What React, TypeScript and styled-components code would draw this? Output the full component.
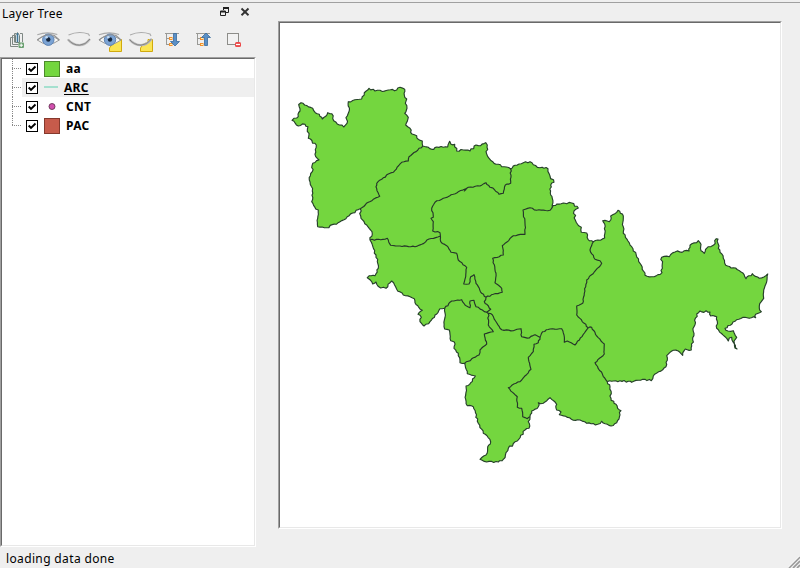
import React from 'react';
import styled, { createGlobalStyle } from 'styled-components';

const GlobalStyle = createGlobalStyle`
  * { box-sizing: border-box; }
  body { margin: 0; background: #efefef; overflow: hidden; }
`;

const Window = styled.div`
  width: 800px;
  height: 568px;
  padding-top: 2px;
  display: flex;
  flex-direction: column;
  background: #efefef;
  color: #000;
  font: 12px/16px 'Noto Sans', sans-serif;
`;

const Workspace = styled.main`
  height: 545px;
  border-top: 1px solid #a0a0a0;
  display: flex;
  gap: 22px;
`;

const Dock = styled.aside`
  width: 256px;
  display: flex;
  flex-direction: column;
`;

const DockTitle = styled.header`
  height: 20px;
  padding: 3px 6px 0 2px;
  display: flex;
  align-items: flex-start;
  justify-content: space-between;
`;

const TitleText = styled.span`
  letter-spacing: 0.25px;
`;

const TitleButtons = styled.div`
  display: flex;
  gap: 10px;
  padding-top: 1px;
  svg { display: block; }
`;

const Toolbar = styled.div`
  height: 34px;
  padding: 5px 0 0 5px;
  display: flex;
  gap: 7px;
  svg { display: block; overflow: visible; }
`;

const Sunken = styled.div`
  border: 1px solid;
  border-color: #a0a0a0 #fff #fff #a0a0a0;
  & > * {
    border: 1px solid;
    border-color: #696969 #e8e8e8 #e8e8e8 #696969;
    background: #fff;
    width: 100%;
    height: 100%;
  }
`;

const TreeFrame = styled(Sunken)`
  height: 490px;
`;

const MapFrame = styled(Sunken)`
  width: 504px;
  height: 508px;
  margin-top: 18px;
`;

const Tree = styled.ul`
  margin: 0;
  padding: 0;
  list-style: none;
`;

const Row = styled.li`
  height: 19px;
  padding-left: 10px;
  display: flex;
  align-items: stretch;
`;

const Branch = styled.svg`
  width: 10px;
  height: 19px;
  flex: none;
`;

const RowBody = styled.div<{ $selected?: boolean }>`
  flex: 1;
  padding-left: 4px;
  display: flex;
  align-items: center;
  background: ${p => (p.$selected ? '#efefef' : 'transparent')};
`;

const Check = styled.svg`
  width: 12px;
  height: 12px;
  margin-right: 6px;
  flex: none;
`;

const Swatch = styled.svg<{ $w: number }>`
  width: ${p => p.$w}px;
  height: 16px;
  margin-right: 6px;
  flex: none;
`;

const Label = styled.span<{ $active?: boolean }>`
  font-weight: 700;
  line-height: 18px;
  letter-spacing: 0.3px;
  text-decoration: ${p => (p.$active ? 'underline' : 'none')};
  text-underline-offset: 2px;
`;

const StatusBar = styled.footer`
  flex: 1;
  display: flex;
  justify-content: space-between;
  align-items: flex-start;
  padding: 4px 0 0 6px;
`;

const StatusText = styled.span`
  letter-spacing: 0.36px;
`;

const Grip = styled.svg`
  align-self: flex-end;
  display: block;
`;

const MapCanvas = styled.svg`
  display: block;
`;

/* ---------- icons ---------- */

const Eye = () => (
  <>
    <path d="M1 10Q11 1 23 10Q12 18.5 1 10Z" fill="#f7f7f5" stroke="#999" strokeWidth="1" />
    <path d="M1 4.7Q11 1 21 4.5" fill="none" stroke="#aaa" strokeWidth="1.2" />
    <circle cx="12" cy="9.7" r="5.7" fill="#7ba3d4" stroke="#5c82b3" />
    <circle cx="12" cy="9.5" r="2.2" fill="#16263c" />
    <circle cx="10.3" cy="7.3" r="1.3" fill="#c5dcf3" />
    <path d="M1 10Q10 2.8 18 5.5L23 10" fill="none" stroke="#929292" strokeWidth="1.2" />
  </>
);

const ClosedEye = () => (
  <>
    <path d="M1 5Q11 .5 21 4L22 6" fill="none" stroke="#aaa" strokeWidth="1.1" />
    <path d="M.5 9.5Q5 15 12 15.2Q18 15 22.5 9" fill="none" stroke="#bbb" strokeWidth="2.3" />
    <path d="M.5 9.5Q5 15 12 15.2Q18 15 22.5 9" fill="none" stroke="#858585" strokeWidth="1" />
  </>
);

const Note = () => <path d="M11.5 18L14 14.5L19 12V9.5H23.5V21.5H11.5Z" fill="#fbe553" stroke="#d0a90e" strokeWidth="1" />;

const TreeLines = () => (
  <>
    <path d="M0 3.5H14M1.5 4V15M2 8.5H4M2 14.5H4" fill="none" stroke="#9a9a96" />
    <rect x="4.5" y="7.5" width="2.5" height="2" fill="#fff0b0" stroke="#f3902c" />
    <rect x="4.5" y="13.5" width="2.5" height="2" fill="#fff0b0" stroke="#f3902c" />
  </>
);

const ToolIcon = ({ children }: { children: React.ReactNode }) => (
  <svg width="24" height="24" viewBox="0 0 24 24">{children}</svg>
);

/* ---------- map geometry ---------- */

const OUTLINE = `292,120.3 296.7,118 300,111 298.7,104.5 301,102.7 306.7,105.5 312.7,108.3 315.3,112.7 319.3,114.3 322.3,119
325.7,116.3 327.7,112.7 331.7,113.7 333.7,120.7 343.7,127 347,123.3 346,117.7 348.7,112.3 348.3,101.7 361.7,99 364.3,92.7
369,88.3 375,91 380,90.3 382.3,91.5 388.3,90 396.7,90 400,87.3 404.7,89.3 404.3,95 406.7,99 405.3,103.3 407,108.3
404.7,113.3 408.3,117.3 405.7,125 410,128.3 412,134 416.7,135.7 418.3,139.3 422.3,141 422.7,146 428.3,147.3 431.7,149.3
436.7,147 447.7,147 449.7,141.3 451,144.3 454.7,144.3 456.7,151 463.3,150 470,151 476,145 480.7,145.7 485.7,142.7
487.3,145 486.7,154 492.7,161.7 501.7,166.7 510.7,169 515,165.3 523.3,162.7 530,161.7 533.3,164.7 540,167.7 548,168.7
550,176 554,182.3 550.7,185 550.7,195 552.3,198.3 552.3,207.3 556.7,204 563.3,203 566.7,203.7 571.7,203 578.3,208
574,211 575.3,220 581.3,227.3 581.3,232.3 586.7,233 588,239.3 593.3,241.7 604.7,238 604.7,224 602.7,220.7 609.3,221.7
610.7,216 618,210.3 623.3,216 623.3,233.3 631.7,246.7 640,263.3 645,275.3 651.7,276.7 662,272.7 661.7,257.3 669.3,256.7
675,252 689,251 690,245.3 698.3,240.7 701,244.3 701,250.7 704.3,253.3 708.3,246.7 713.3,245.3 716.3,238.7 718,239
718.3,248.3 723.3,258.3 725.7,265.3 733.3,267.7 740.7,271.7 746,278.7 752.3,273.7 759.3,278.3 767.7,274 767,280
763.7,290 763.7,298.3 759.3,306 761.3,311.7 755.7,314.3 755.7,317.7 745,317.3 735,321.3 725,328.3 728,331 733.3,330.7
736.7,337.3 734,341.3 734.5,344 737,349 735,348 733,342 731.7,337.3 729.3,338 728.3,341 725,336.7 716.7,328.3
716.7,316.7 710.7,316 710,312 700,311 696.7,314 694,326.7 692.7,340 691.3,350 685.3,349 682.7,355.3 678.3,351
673.3,350.3 666.7,355.7 666,366.7 653.3,376 651.3,380.7 645,379.3 638.3,380.3 631.7,382.3 628.3,381.3 607.3,381.7
610,386.7 611,398.3 614,403.3 621,410.7 616.7,422.7 611,426 601.7,421.3 597.7,424.3 586.7,423.3 580,420 573.3,420.3
559.3,414.7 561,412 556.7,410 556.7,404.3 550,397.7 543.3,403.3 538.3,402.7 538.3,406.7 531.7,411 530,416.7
528.3,421.7 529,428.3 525,430 517.3,441 508.3,448.3 503.3,459.3 498.3,462 486.7,462 480,459.3 486,455 487.7,446.7
490.7,442 488,437.3 483.3,433.3 478.3,423.3 473.3,406.7 467.3,405.7 465.7,395 466,386 470.7,382.7 475.3,376 467.3,373.7
464.7,363.3 460,362.7 458.3,353.3 454,348.3 454.3,342 450.7,340.7 449.3,330 444.7,329 444.7,308.3 440,308.7 435,315
430,321.7 424,326 420,321.7 421.3,317.3 418,314.3 422.3,310.3 415,302.7 414.3,298.7 403.3,295 396.7,289.3 391.7,281
386,288.3 380.7,288 376,282 372.7,284 367.3,277.7 369.3,275.7 375,275.7 378.3,268.3 376,255 370,240 372.3,234
366.7,225 361,218.3 360.3,208.7 340,221.7 326.7,227.7 317.7,226.7 318.3,210 315.7,209 311.7,201.7 312.3,191 309.3,180
312.3,171.7 312.7,163.3 319,160 315,154.3 316.3,145 308.3,138.3 308,126.7 305,124.3 298.3,126 292,120.3`;

const BORDERS = [
  '422.7,146 409,156.7 408.3,161 401.7,162.3 393.3,172.3 388.3,174 376.7,183.3 376,186.7 379.7,196.3 368.3,202.3 360.3,208.7',
  '370,240 385,239.3 387.3,238.3 390.7,245.3 400,246 415,246.7 421.7,244.3 429,239 440,236.3',
  '510.7,169 510.7,183.3 505.3,185 503.3,193.3 499,194.3 493.3,188.3 490,187.3 486,182.7 480,186 468.3,187.3 464.3,191 466.5,188.5 453.3,194.3 443.3,198.3 435,202.3 431.7,208.3 433.3,217.3 431,218.3 433.3,221.7 432.7,231 440,232.7 440.7,241.7 446.7,245.7 451,252.3 456.7,253.3 458.3,260 466.7,267.3 465.7,276.7 463.7,284 469,284 470.7,276.7 474,274.7 476,283.3 479.3,288.3 481.7,293.3 486,297.3',
  '486,297.3 493.3,294.3 502.3,292.3 501.7,288.3 495,282.7 496,273.3 492.7,258.3 503.3,255 502.3,245.7 513.3,235.7 525,234.3 525,223.3 523,210 530,207.7 536.7,210.3 550,210.3 552.3,207.3',
  '486,297.3 484.3,301.7 490.7,309.3 486.7,312.3',
  '444.7,308.3 451.7,301 461.7,299.7 465,305 470,307.7 470,301 474,300.3 476,306.7 486.7,312.3 492.3,314.7 496.7,322.7 501.7,329.7 513.3,330.7 521,328.7 521.7,336.7 529.3,338 535,334.7 540,337.3 542.7,331.7 550,329 561.7,328.7 564,335 564.3,342.3 567.3,341 575,345 588.3,327.7',
  '488.3,313.3 488.3,325 493.3,331.7 484.3,334 486.7,344 480,350 479,355 464.7,363.3',
  '540,337.3 538.3,342.7 534,344.3 533.3,351.7 528.3,357.3 531,369.3 521.7,380 508.3,387.7 517.3,396.7 517.3,407.3 521.7,408.3 522.7,416.7 527.3,418.7 530,416.7',
  '588.3,327.7 576.7,315 576.7,306 582.7,303.3 584.3,293.3 586.7,280 601.7,263.3 600,260.7 595,259.3 590,250 593.3,241.7',
  '588.3,327.7 591.7,327.3 596.7,336 604.3,344 604.3,354 595,362.7 607.3,381.7',
];

/** Adds small deterministic wiggles between vertices so borders read as natural boundaries. */
function roughen(points: string, amount: number) {
  const pts = points.trim().split(/\s+/).map(p => p.split(',').map(Number));
  let seed = 7;
  const rand = () => {
    seed = (seed * 16807) % 2147483647;
    return seed / 2147483647 - 0.5;
  };
  const out = [pts[0]];
  for (let i = 1; i < pts.length; i++) {
    const [x0, y0] = pts[i - 1];
    const [x1, y1] = pts[i];
    const len = Math.hypot(x1 - x0, y1 - y0);
    const n = Math.max(1, Math.round(len / 2.2));
    for (let k = 1; k < n; k++) {
      const t = k / n;
      const d = rand() * amount;
      out.push([x0 + (x1 - x0) * t - ((y1 - y0) / len) * d, y0 + (y1 - y0) * t + ((x1 - x0) / len) * d]);
    }
    out.push([x1, y1]);
  }
  return out.map(([x, y]) => `${x.toFixed(1)},${y.toFixed(1)}`).join(' ');
}

const outlinePoints = roughen(OUTLINE, 2);
const borderPoints = BORDERS.map(b => roughen(b, 1.2));

/* ---------- layer tree ---------- */

type Layer = { name: string; kind: 'polygon' | 'line' | 'point'; color: string; stroke?: string; active?: boolean };

const LAYERS: Layer[] = [
  { name: 'aa', kind: 'polygon', color: '#74d63f', stroke: '#4d8a2c' },
  { name: 'ARC', kind: 'line', color: '#a5e0cf', active: true },
  { name: 'CNT', kind: 'point', color: '#d14fae' },
  { name: 'PAC', kind: 'polygon', color: '#c75b4b', stroke: '#85392d' },
];

const LayerSymbol = ({ layer }: { layer: Layer }) => (
  <Swatch $w={layer.kind === 'line' ? 14 : 16}>
    {layer.kind === 'polygon' && <rect x=".5" y=".5" width="15" height="15" fill={layer.color} stroke={layer.stroke} />}
    {layer.kind === 'line' && <path d="M0 7H14" stroke={layer.color} strokeWidth="2" />}
    {layer.kind === 'point' && <circle cx="8" cy="7.5" r="3" fill={layer.color} stroke="#673354" strokeWidth=".9" />}
  </Swatch>
);

export default function App() {
  return (
    <Window>
      <GlobalStyle />
      <Workspace>
        <Dock>
          <DockTitle>
            <TitleText>Layer Tree</TitleText>
            <TitleButtons>
              <svg width="10" height="10" viewBox="0 0 10 10" fill="none" stroke="#222">
                <path d="M3 1H9M.5 4.5H5.5" strokeWidth="2" />
                <path d="M3.5 3V1M8.5 1V5.5H6M.5 4V8.5H5.5V4" />
              </svg>
              <svg width="10" height="10" viewBox="0 0 10 10" stroke="#333" strokeWidth="1.9">
                <path d="M1.5 1.5L8.5 8.2M8.5 1.5L1.5 8.2" />
              </svg>
            </TitleButtons>
          </DockTitle>
          <Toolbar>
            <ToolIcon>
              <path d="M8.5 9.5H5.5V18.5H13M10.5 7.5H7.5V16.5H13.5M15 5.5H17.5V14M9.5 14.5V5.5H11" fill="none" stroke="#7f8884" />
              <path d="M10.5 14.5V7.5L12.5 4.5L14.5 7.5V14.5Z" fill="#dfe9ee" stroke="#71817d" />
              <path d="M12.5 5V14" stroke="#3f7799" strokeWidth="1.4" />
              <rect x="13.5" y="14.5" width="5.5" height="5.5" rx="1" fill="#6aa070" />
              <path d="M16.2 15.5V19M14.5 17.2H18" stroke="#fff" />
            </ToolIcon>
            <ToolIcon><g transform="translate(.3 2)"><Eye /></g></ToolIcon>
            <ToolIcon><g transform="translate(.5 2)"><ClosedEye /></g></ToolIcon>
            <ToolIcon><g transform="translate(0 2)"><Note /><Eye /></g></ToolIcon>
            <ToolIcon><g transform="translate(0 2)"><Note /><ClosedEye /></g></ToolIcon>
            <ToolIcon>
              <g transform="translate(5 2)">
                <TreeLines />
                <path d="M8.5 3.5H11.5V11.5H14.5L10 16L5.5 11.5H8.5Z" fill="#5b8fc5" stroke="#396b9d" strokeWidth=".8" />
              </g>
            </ToolIcon>
            <ToolIcon>
              <g transform="translate(5 2)">
                <TreeLines />
                <path d="M8.5 15.5H11.5V7.5H14.5L10 3L5.5 7.5H8.5Z" fill="#5b8fc5" stroke="#396b9d" strokeWidth=".8" />
              </g>
            </ToolIcon>
            <ToolIcon>
              <rect x="5.5" y="5.5" width="11" height="11" fill="#f2f2f2" stroke="#8d8d89" />
              <rect x="13" y="14" width="6" height="5" rx="1.5" fill="#ec4a4a" />
              <path d="M14 16.5H18" stroke="#fff" strokeWidth="1.2" />
            </ToolIcon>
          </Toolbar>
          <TreeFrame>
            <Tree>
              {LAYERS.map((layer, i) => (
                <Row key={layer.name}>
                  <Branch stroke="#888" strokeDasharray="1 1" fill="none">
                    <path d={i === LAYERS.length - 1 ? 'M.5 0V9' : 'M.5 0V19'} />
                    <path d="M0 9.5H10" />
                  </Branch>
                  <RowBody $selected={layer.active}>
                    <Check viewBox="0 0 12 12">
                      <rect x=".5" y=".5" width="11" height="11" fill="#fff" stroke="#000" />
                      <path d="M2.7 5.5L5 8L9.5 3.5" fill="none" stroke="#000" strokeWidth="1.9" />
                    </Check>
                    <LayerSymbol layer={layer} />
                    <Label $active={layer.active}>{layer.name}</Label>
                  </RowBody>
                </Row>
              ))}
            </Tree>
          </TreeFrame>
        </Dock>
        <MapFrame>
          <div>
            <MapCanvas width="500" height="504" viewBox="280 23 500 504">
              <polygon points={outlinePoints} fill="#74d63f" stroke="#26402a" strokeWidth="1.15" strokeLinejoin="round" />
              <g fill="none" stroke="#26372a" strokeWidth="1.15" strokeLinejoin="round">
                {borderPoints.map((points, i) => <polyline key={i} points={points} />)}
              </g>
            </MapCanvas>
          </div>
        </MapFrame>
      </Workspace>
      <StatusBar>
        <StatusText>loading data done</StatusText>
        <Grip width="12" height="12" viewBox="0 0 12 12">
          <path d="M1 12L12 1M5 12L12 5M9 12L12 9" stroke="#999" strokeWidth="1.7" />
          <path d="M0 11.5L11.5 0" stroke="#fff" strokeWidth=".8" />
        </Grip>
      </StatusBar>
    </Window>
  );
}
